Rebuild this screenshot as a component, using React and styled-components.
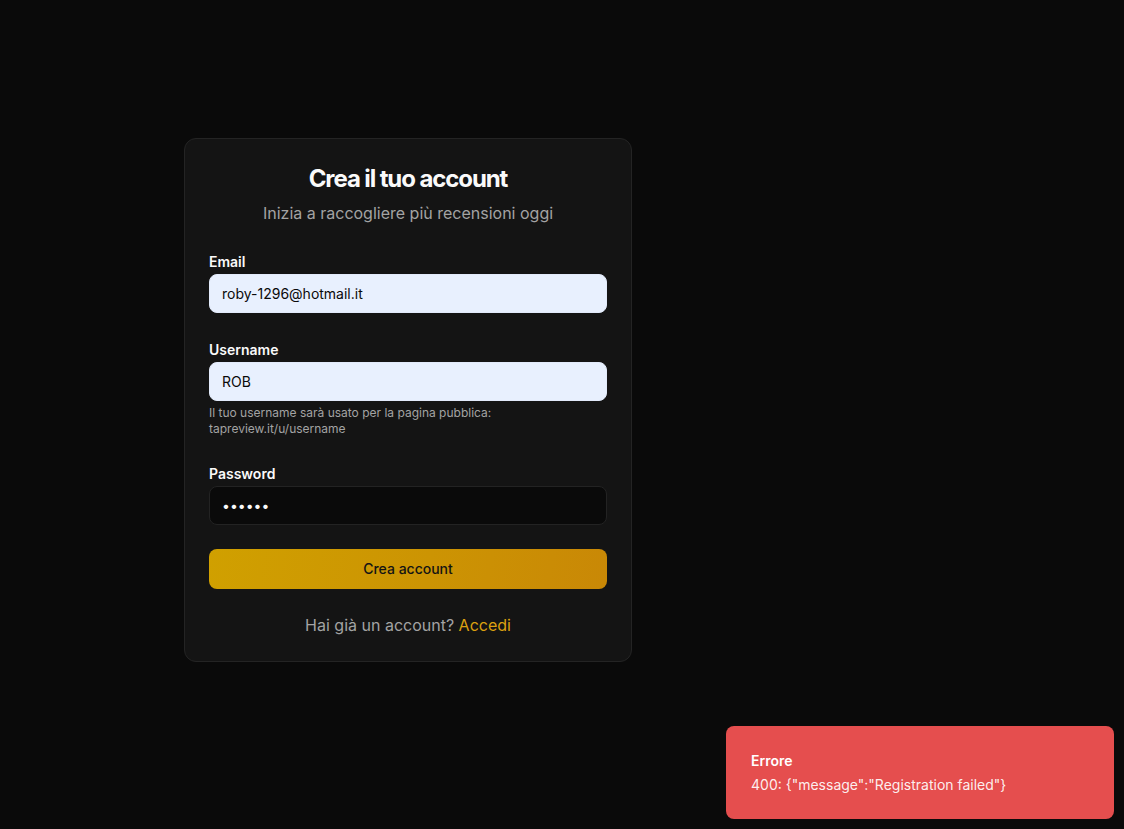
import styled, { createGlobalStyle } from "styled-components";

const GlobalStyle = createGlobalStyle`
  * { box-sizing: border-box; }
  html, body {
    margin: 0;
    background: #0a0a0a;
    font-family: Inter, "Noto Sans", "Liberation Sans", sans-serif;
    color: #fafafa;
  }
`;

const Page = styled.main`
  min-height: 100vh;
  display: flex;
  padding-top: 138px;
`;

const Column = styled.section`
  width: 816px;
  display: flex;
  justify-content: center;
  align-items: flex-start;
`;

const Card = styled.div`
  width: 448px;
  background: #141414;
  border: 1px solid #242424;
  border-radius: 12px;
  padding: 24px;
`;

const Title = styled.h1`
  margin: 0;
  font-size: 24px;
  line-height: 32px;
  font-weight: 700;
  letter-spacing: -1.1px;
  text-align: center;
  color: #fafafa;
`;

const Subtitle = styled.p`
  margin: 6px 0 0;
  font-size: 16px;
  line-height: 24px;
  text-align: center;
  color: #a3a3a3;
`;

const Form = styled.form`
  margin-top: 27px;
  display: flex;
  flex-direction: column;
`;

const Field = styled.div`
  display: flex;
  flex-direction: column;
  margin-bottom: ${(p) => p.$space ?? 27}px;
`;

const Label = styled.label`
  font-size: 14px;
  line-height: 20px;
  font-weight: 600;
  color: #fafafa;
  margin-bottom: 2px;
`;

const Input = styled.input`
  height: 39px;
  width: 100%;
  border-radius: 8px;
  padding: 0 12px;
  font-family: inherit;
  font-size: 14px;
  outline: none;
  border: 1px solid ${(p) => (p.$filled ? "#e2eafa" : "#232323")};
  background: ${(p) => (p.$filled ? "#e8f0fe" : "#0a0a0a")};
  color: ${(p) => (p.$filled ? "#0a0a0a" : "#fafafa")};
`;

const Hint = styled.p`
  margin: 4px 0 0;
  font-size: 12px;
  line-height: 16px;
  color: #a3a3a3;
`;

const Submit = styled.button`
  height: 40px;
  width: 100%;
  border: none;
  border-radius: 8px;
  background: linear-gradient(100deg, #d0a000 0%, #cc9403 55%, #c98806 100%);
  color: #141414;
  font-family: inherit;
  font-size: 14px;
  font-weight: 500;
  line-height: 38px;
  cursor: pointer;
`;

const Footer = styled.p`
  margin: 24px 0 0;
  font-size: 16px;
  line-height: 24px;
  text-align: center;
  color: #a3a3a3;
`;

const Link = styled.a`
  color: #dca010;
  text-decoration: none;
`;

const Toast = styled.div`
  position: fixed;
  right: 10px;
  bottom: 10px;
  width: 388px;
  background: #e54e4e;
  border-radius: 8px;
  padding: 25px 25px 24px;
  display: flex;
  flex-direction: column;
  gap: 4px;
`;

const ToastTitle = styled.div`
  font-size: 14px;
  line-height: 20px;
  font-weight: 600;
  color: #fff;
`;

const ToastText = styled.div`
  font-size: 14px;
  line-height: 20px;
  color: rgba(255, 255, 255, 0.92);
`;

export default function App() {
  return (
    <>
      <GlobalStyle />
      <Page>
        <Column>
          <Card>
            <Title>Crea il tuo account</Title>
            <Subtitle>Inizia a raccogliere più recensioni oggi</Subtitle>
            <Form onSubmit={(e) => e.preventDefault()}>
              <Field>
                <Label htmlFor="email">Email</Label>
                <Input id="email" $filled readOnly value="roby-1296@hotmail.it" />
              </Field>
              <Field>
                <Label htmlFor="username">Username</Label>
                <Input id="username" $filled readOnly value="ROB" />
                <Hint>
                  Il tuo username sarà usato per la pagina pubblica:
                  <br />
                  tapreview.it/u/username
                </Hint>
              </Field>
              <Field $space={24}>
                <Label htmlFor="password">Password</Label>
                <Input id="password" type="password" readOnly value="secret" />
              </Field>
              <Submit type="submit">Crea account</Submit>
            </Form>
            <Footer>
              Hai già un account? <Link href="#">Accedi</Link>
            </Footer>
          </Card>
        </Column>
      </Page>
      <Toast>
        <ToastTitle>Errore</ToastTitle>
        <ToastText>400: {'{"message":"Registration failed"}'}</ToastText>
      </Toast>
    </>
  );
}
